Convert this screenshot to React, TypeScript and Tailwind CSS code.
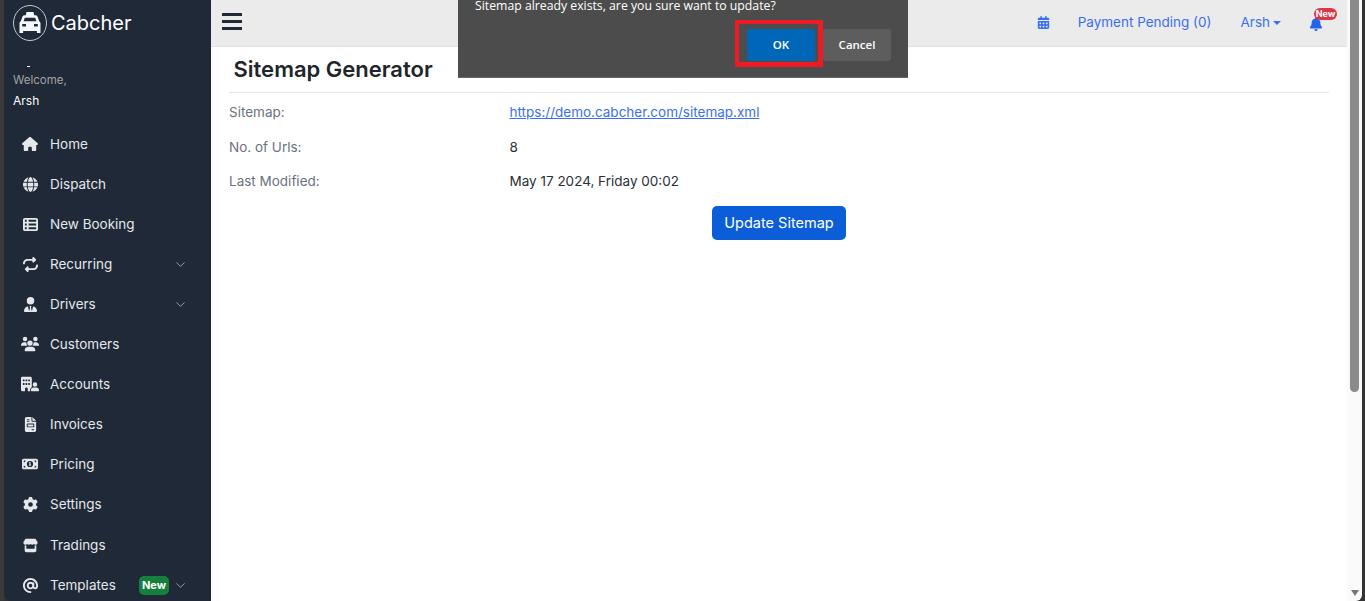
import { FaHouse, FaGlobe, FaTableList, FaRepeat, FaUserTie, FaUsers, FaBuildingUser, FaFileInvoice, FaMoneyBill1, FaGear, FaStore, FaAt, FaCalendarDays, FaBell } from "react-icons/fa6";
import { ChevronDown } from "lucide-react";
import type { ReactNode } from "react";

const items: { label: string; icon: ReactNode; chevron?: boolean; badge?: boolean }[] = [
  { label: "Home", icon: <FaHouse size={16} /> },
  { label: "Dispatch", icon: <FaGlobe size={15} /> },
  { label: "New Booking", icon: <FaTableList size={15} /> },
  { label: "Recurring", icon: <FaRepeat size={15} />, chevron: true },
  { label: "Drivers", icon: <FaUserTie size={15} />, chevron: true },
  { label: "Customers", icon: <FaUsers size={18} /> },
  { label: "Accounts", icon: <FaBuildingUser size={18} /> },
  { label: "Invoices", icon: <FaFileInvoice size={15} /> },
  { label: "Pricing", icon: <FaMoneyBill1 size={16} /> },
  { label: "Settings", icon: <FaGear size={15} /> },
  { label: "Tradings", icon: <FaStore size={15} /> },
  { label: "Templates", icon: <FaAt size={15} />, chevron: true, badge: true },
];

function Logo() {
  return (
    <svg width="35" height="36" viewBox="0 0 35 36" className="shrink-0">
      <ellipse cx="17" cy="18" rx="16.5" ry="17.5" fill="none" stroke="#c4c9d0" strokeWidth="1" />
      <path fill="#f4f7fb" d="M13.5 7h7l.7 3.2h1.3c1 0 1.8.6 2.1 1.500l1.600 4.600c.9.5 1.300 1.300 1.300 2.200V28h-3.600v-2H10.100v2H6.500v-9.500c0-.9.400-1.700 1.300-2.200l1.600-4.600c.3-.9 1.100-1.500 2.100-1.500h1.300z" />
      <path fill="#1f2937" d="M11.800 12.800h10.400l1.200 3.400H10.600zM9.200 19h3.800v2.500H9.200zM21 19h3.800v2.500H21z" />
    </svg>
  );
}

export default function App() {
  return (
    <div className="h-[601px] w-[1365px] overflow-hidden flex bg-[#333] text-[13.5px] text-[#2b3035] [font-family:Inter,'Liberation_Sans',sans-serif]">
      <div className="w-[4px] shrink-0 bg-[#3a3a3a]" />
      <aside className="w-[207px] shrink-0 h-full bg-[#1f2937] rounded-bl-[8px] text-[#f3f4f6] flex flex-col overflow-hidden">
        <div className="flex items-center gap-[3px] pl-[9px] pt-[5px] h-[41px] shrink-0">
          <Logo />
          <span className="text-[20px] leading-[28px] text-white">Cabcher</span>
        </div>
        <div className="h-[26px] shrink-0 relative">
          <span className="absolute left-[23px] bottom-0 w-[3px] h-[1px] bg-white" />
        </div>
        <div className="pl-[9px] mt-[5px]">
          <div className="text-[11.5px] leading-[16px] text-[#a3a3a3]">Welcome,</div>
          <div className="text-[12px] leading-[16px] mt-[5px] text-white">Arsh</div>
        </div>
        <nav className="mt-[15px] flex flex-col pl-[16px] pr-[23px]">
          {items.map((it) => (
            <div key={it.label} className="h-[40px] flex items-center shrink-0 [&:nth-child(11)]:mt-[1px]">
              <span className="w-[20px] flex justify-center text-[#e5e7eb]">{it.icon}</span>
              <span className="ml-[10px] text-[#e5e7eb]">{it.label}</span>
              <span className="ml-auto flex items-center gap-[4px]">
                {it.badge && (
                  <span className="bg-[#15803d] text-white rounded-[5px] text-[11px] font-bold leading-[19px] w-[30px] text-center">New</span>
                )}
                {it.chevron && <ChevronDown size={15} strokeWidth={1.5} className="text-[#a3a3a3]" />}
              </span>
            </div>
          ))}
        </nav>
      </aside>
      <main className="flex-1 min-w-0 bg-white flex flex-col relative">
        <header className="h-[47px] shrink-0 bg-[#ebebeb] border-b border-[#dee2e6] flex items-center pl-[11px] pb-[3px] text-[#3a6ff0]">
          <div className="w-[20px] flex flex-col gap-[4px]">
            <span className="h-[3px] bg-[#1f2937]" />
            <span className="h-[3px] bg-[#1f2937]" />
            <span className="h-[3px] bg-[#1f2937]" />
          </div>
          <div className="ml-auto flex items-center translate-y-[1px]">
            <FaCalendarDays size={13} />
            <span className="ml-[28px]">Payment Pending (0)</span>
            <span className="ml-[29px]">Arsh</span>
            <span className="ml-[3px] w-0 h-0 border-x-[4px] border-x-transparent border-t-[4px] border-t-[#3a6ff0]" />
            <span className="relative ml-[28px] mr-[24px] top-[1px] text-[#2563eb]">
              <FaBell size={14} />
              <span className="absolute -top-[9px] -right-[14px] w-[23px] text-center bg-[#dc3545] text-white rounded-[6px] text-[9px] font-bold leading-[12px]">New</span>
            </span>
          </div>
        </header>
        <section className="px-[18px]">
          <h1 className="text-[22px] leading-[45px] font-semibold text-[#212529] pl-[4.5px] border-b border-[#e5e7eb] h-[46px]">Sitemap Generator</h1>
          <div className="mt-[2px] grid grid-cols-[280.5px_1fr] auto-rows-[34.5px] items-center">
            <span className="text-[#6b7280]">Sitemap:</span>
            <a className="text-[#3a6ff0] underline">https://demo.cabcher.com/sitemap.xml</a>
            <span className="text-[#6b7280]">No. of Urls:</span>
            <span>8</span>
            <span className="text-[#6b7280]">Last Modified:</span>
            <span>May 17 2024, Friday 00:02</span>
          </div>
          <div className="flex justify-center mt-[7px]">
            <button className="h-[34px] w-[134px] bg-[#0b5ed7] text-white rounded-[5px] text-[14.5px]">Update Sitemap</button>
          </div>
        </section>
        <div className="absolute left-[247px] top-0 w-[450px] h-[78px] bg-[#4c4c4c] border-b border-[#666] text-white [font-family:'Open_Sans',sans-serif]">
          <p className="absolute left-[17px] top-0 text-[12.25px] leading-[12px]">Sitemap already exists, are you sure want to update?</p>
          <div className="absolute left-[277px] top-[20px] w-[88px] h-[47px] border-[#ed1c24] border-l-[4px] border-t-[4px] border-r-[5px] border-b-[5px]" />
          <button className="absolute left-[289px] top-[29px] w-[68px] h-[32px] bg-[#0067b8] rounded-[3px] text-[11.5px] font-semibold">OK</button>
          <button className="absolute left-[365px] top-[29px] w-[68px] h-[32px] bg-[#5d5d5d] rounded-[3px] text-[11.5px] font-semibold">Cancel</button>
        </div>
      </main>
      <div className="w-[15px] shrink-0 bg-[#fafafa] flex flex-col items-center relative rounded-br-[6px]">
        <div className="w-[9px] h-[392px] bg-[#8a8a8a] rounded-b-[5px]" />
        <div className="absolute bottom-[5px] w-0 h-0 border-x-[4.5px] border-x-transparent border-t-[6px] border-t-[#777]" />
      </div>
      <div className="w-[3px] shrink-0 bg-[#333]" />
    </div>
  );
}
